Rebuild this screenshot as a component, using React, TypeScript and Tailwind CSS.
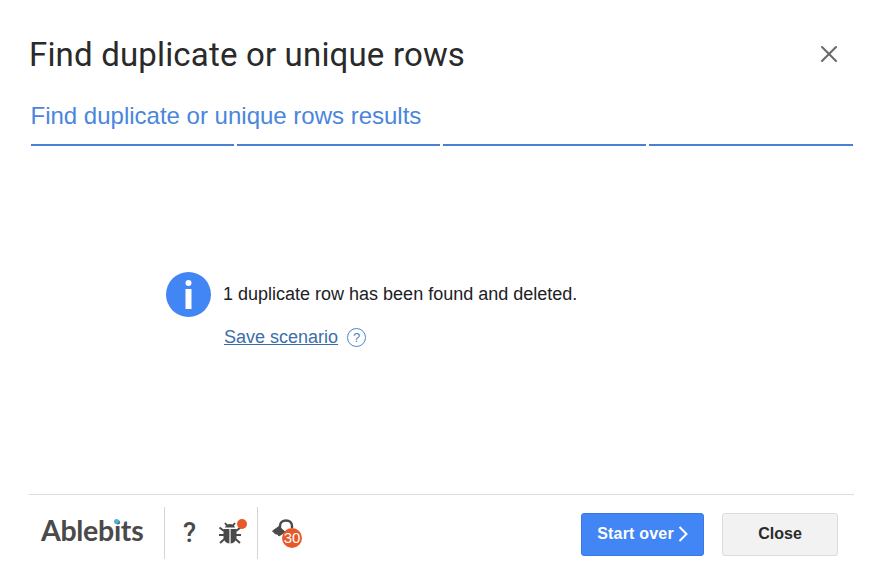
import { X } from "lucide-react"

const tabs = [0, 1, 2, 3]

function InfoIcon() {
  return (
    <svg width="45" height="45" viewBox="0 0 45 45" className="shrink-0">
      <circle cx="22.5" cy="22.5" r="22.5" fill="#4285f4" />
      <circle cx="22.5" cy="11" r="3" fill="#fff" />
      <rect x="19.5" y="17" width="6" height="20" fill="#fff" />
    </svg>
  )
}

function BugIcon() {
  return (
    <svg width="24" height="24" viewBox="0 0 24 24" fill="#4a4a4a">
      <path d="M7 6.5 C7.5 4 10 3 12 3 C14 3 16.5 4 17 6.5 Z" />
      <path d="M5.5 8 H11.4 V22.5 C8 22.5 5.5 19.5 5.5 16 Z" />
      <path d="M18.5 8 H12.6 V22.5 C16 22.5 18.5 19.5 18.5 16 Z" />
      <path d="M7 2 L9 4.5 M17 2 L15 4.5 M1.5 6.5 L6 10 M22.5 6.5 L18 10 M1 14 H6 M23 14 H18 M2 22 L6.5 18 M22 22 L17.5 18" stroke="#4a4a4a" strokeWidth="2" fill="none" />
    </svg>
  )
}

function KeyBadge() {
  return (
    <div className="relative w-[32px] h-[30px]">
      <svg width="24" height="24" viewBox="0 0 24 24" fill="none" stroke="#4a4a4a" className="absolute left-0 top-0">
        <path d="M8 11 V8 C8 4.5 10.5 2.5 14 2.5 C17.5 2.5 20 4.5 20 8 V10" strokeWidth="2.4" />
        <path d="M0.5 13 L7 8.5 L13 14 L7 18 L5.5 16 L3.5 16 Z" fill="#4a4a4a" strokeWidth="1" />
      </svg>
      <span className="absolute left-[10px] top-[10px] w-[20px] h-[20px] rounded-full bg-[#e8592a] text-white text-[15px] leading-[20px] text-center">
        30
      </span>
    </div>
  )
}

export default function App() {
  return (
    <div className="w-[875px] h-[585px] bg-white flex flex-col font-['Liberation_Sans',Arial,sans-serif] overflow-hidden">
      {/* Title */}
      <div className="flex items-center justify-between pl-[29px] pr-[32px] pt-[34px] h-[76px]">
        <h1 className="font-['Roboto',sans-serif] font-normal text-[33px] leading-[42px] tracking-[0.17px] text-[#2a2a2a]">
          Find duplicate or unique rows
        </h1>
        <X className="w-[28px] h-[28px] -mt-[3px] text-[#6b6b6b]" strokeWidth={1.8} />
      </div>

      {/* Step title + progress */}
      <div className="pl-[31px] pr-[22px] pt-[24px]">
        <div className="-ml-[0.5px] text-[24px] leading-[32px] text-[#4a86dc]">Find duplicate or unique rows results</div>
        <div className="grid grid-cols-[203px_203px_203px_204px] gap-[3px] mt-[12px]">
          {tabs.map((t) => (
            <div key={t} className="h-[2px] bg-[#4a7fd4]" />
          ))}
        </div>
      </div>

      {/* Result message */}
      <div className="flex-1 pl-[166px] pt-[126px]">
        <div className="flex items-center gap-[12px]">
          <InfoIcon />
          <span className="text-[18px] text-[#202124]">1 duplicate row has been found and deleted.</span>
        </div>
        <div className="flex items-center gap-[9px] pl-[58px] mt-[8px]">
          <a className="text-[18px] leading-[24px] text-[#3b6ea8] underline">Save scenario</a>
          <span className="w-[19px] h-[19px] rounded-full border border-[#4a86c8] text-[#4a86c8] text-[13px] leading-[17px] text-center">
            ?
          </span>
        </div>
      </div>

      {/* Footer */}
      <div className="ml-[29px] mr-[21px] border-t border-[#dcdcdc] h-[91px] flex items-start pt-[12px]">
        <div className="flex items-center h-[52px] w-[136px] pl-[12px] border-r border-[#d4d4d4]">
          <span className="relative -mt-[6px] font-['Lato',sans-serif] font-bold text-[28.5px] text-[#4a4a4a] tracking-[-0.3px]">
            Ablebits
            <span className="absolute left-[73px] top-[10px] w-[5px] h-[5px] rounded-full bg-[#4fb3d0]" />
          </span>
        </div>
        <div className="flex items-center h-[52px] w-[93px] border-r border-[#d4d4d4] pl-[18px] gap-[21px]">
          <span className="font-['Roboto',sans-serif] text-[27px] font-medium text-[#4a4a4a] w-[14px]">?</span>
          <div className="relative">
            <BugIcon />
            <span className="absolute -right-[5px] -top-[2px] w-[10px] h-[10px] rounded-full bg-[#e8592a]" />
          </div>
        </div>
        <div className="flex items-center h-[52px] pl-[14px]">
          <KeyBadge />
        </div>
        <div className="ml-auto flex items-center gap-[18px] mt-[6px] mr-[16px]">
          <button className="w-[123px] h-[43px] pb-[1px] rounded-[3px] bg-[#4285f4] border border-[#3b78e7] text-white font-bold text-[16px] tracking-[0.2px] flex items-center justify-center gap-[4px]">
            Start over
            <svg width="10" height="16" viewBox="0 0 10 16" fill="none" stroke="#fff" strokeWidth="2">
              <path d="M1.5 1 L8.5 8 L1.5 15" />
            </svg>
          </button>
          <button className="w-[116px] h-[43px] pb-[1px] rounded-[3px] bg-[#f2f2f2] border border-[#dcdcdc] text-[#2a2a2a] font-bold text-[16px]">
            Close
          </button>
        </div>
      </div>
    </div>
  )
}
